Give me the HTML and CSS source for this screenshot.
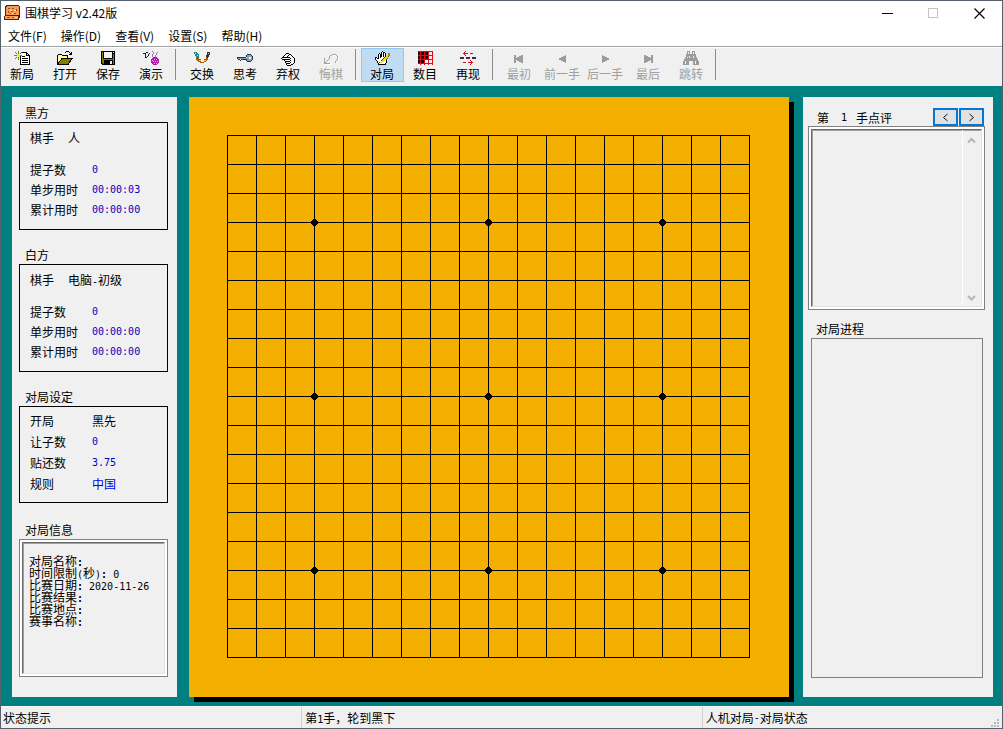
FILE: index.html
```html
<!DOCTYPE html>
<html lang="zh-CN">
<head>
<meta charset="utf-8">
<title>围棋学习 v2.42版</title>
<link rel="stylesheet" href="styles.css">
</head>
<body>
<div class="window">
  <header class="titlebar">
    <svg class="app-icon" viewBox="0 0 16 16"><path d="M2 0h13v1h1v12h-1v2H0v-4h1V1h1z" fill="#4a2410"/><path d="M3 1h12v9H2V2h1z" fill="#f79a52"/><path d="M1 11h13v3H1z" fill="#f9a25c"/><path d="M4 3h2v1H4zM8 3h2v1H8zM12 4h1v2h-1zM4 6h1v2H4zM7 6h2v1H7zM10 8h2v1h-2zM6 8h1v1H6zM3 12h3v1H3zM8 12h2v1H8z" fill="#a04c1c"/><path d="M6 5h2v1H6zM10 5h2v1h-2zM8 8h1v1H8zM11 12h2v1h-2z" fill="#ffe4b8"/></svg>
    <h1 class="title">围棋学习 v2.42版</h1>
    <button class="caption" aria-label="最小化"><svg viewBox="0 0 11 11"><path d="M0 5h11v1H0z"/></svg></button>
    <button class="caption" aria-label="最大化" disabled><svg viewBox="0 0 11 11"><path d="M.5.5h9v9h-9z" fill="none" stroke="#c4c4c4"/></svg></button>
    <button class="caption" aria-label="关闭"><svg class="smooth" viewBox="0 0 11 11"><path d="M.5.5l10 10M10.500.5l-10 10" stroke="#000" stroke-width="1.200"/></svg></button>
  </header>
  <nav class="menubar">
    <button>文件(F)</button><button>操作(D)</button><button>查看(V)</button><button>设置(S)</button><button>帮助(H)</button>
  </nav>
  <div class="toolbar">
    <button><svg viewBox="0 0 16 16"><path d="M6.500 4v9.500h9v-9l-3-3H8M12.500 1.500v3h3" fill="none" stroke="#000"/><path d="M7 4V2h5v3h3v8H7z" fill="#fff"/><path d="M8 5h3v1H8zM8 7h6v1H8zM8 9h6v1H8zM8 11h6v1H8z" fill="#000"/><path d="M4 0h1v3H4zM0 4h3v1H0zM6 4h2v1H6zM4 6h1v3H4zM1 1h1v1H1zM2 2h1v1H2zM7 1h1v1H7zM6 2h1v1H6zM2 6h1v1H2zM1 7h1v1H1z" fill="#808000"/><path d="M3 3h3v3H3z" fill="#e8e84a"/></svg>新局</button>
    <button><svg viewBox="0 0 16 16"><path d="M1 4h4l1 1h5v3H5l-4 5z" fill="#ffff90"/><path d="M5 8h10l-4 5H1z" fill="#808000"/><path d="M.5 13.500V4.500l1-1h3l1 1h5v3M.5 13.500h10.500l4-6H5l-4 5" fill="none" stroke="#000"/><path d="M9 0h3v1H9zM8 1h1v1H8zM12 1h1v1h-1zM13 2h1v1h-1zM14 1h1v3h-3V3h2z" fill="#000"/></svg>打开</button>
    <button><svg viewBox="0 0 16 16"><path d="M1 0h14v14H2l-1-1z" fill="#000"/><path d="M2 1h1v11H2zM13 3h1v10h-1zM3 8h10v1H3zM3 9h1v4H3z" fill="#808000"/><path d="M4 1h8v6H4z" fill="#f0f0f0"/><path d="M10 10h2v3h-2zM13 1h1v1h-1z" fill="#ececec"/></svg>保存</button>
    <button><svg viewBox="0 0 16 16"><path d="M0 2h3v1H0zM3 1h2v1H3zM2 3h1v4H2zM3 6h1v1H3zM4 5h1v1H4zM5 3h1v2H5zM6 2h1v1H6z" fill="#202020"/><path d="M9 0h1v1H9zM10 1h1v2h-1zM9 3h1v3H9zM14 1h1v1h-1zM13 2h1v2h-1zM12 4h1v3h-1z" fill="#b06ab0"/><path d="M10 6h4v1h1v1h1v4h-1v1h-1v1h-4v-1H9v-1H8V8h1V7h1z" fill="#ad19ad"/><path d="M9 9h1v1H9zM11 8h1v1h-1zM13 8h1v1h-1zM10 10h1v1h-1zM12 10h1v1h-1zM14 10h1v1h-1zM11 12h1v1h-1zM13 12h1v1h-1z" fill="#f5b4f5"/></svg>演示</button>
    <span class="sep"></span>
    <button><svg viewBox="0 0 16 16"><path d="M0 1h3v1h1v1h1v3H3v1H2V5H1V3H0z" fill="#148c88"/><path d="M1 2h1v1H1zM3 4h1v1H3z" fill="#a3eee6"/><path d="M13 1h3v3h-1v2h-1v1h-2V4h1z" fill="#3d2925"/><path d="M14 2h1v1h-1z" fill="#e4b5a4"/><path d="M2 7h3v1h2v1h3V8h2V7h2v2h-1v1h-1v1h-2v1H6v-1H4v-1H3V9H2z" fill="#a25b15"/><path d="M5 9h2v1H5zM10 9h2v1h-2z" fill="#ffbd55"/><path d="M7 9h3v2H7z" fill="#fff1d3"/><path d="M3 6h2v1H3zM12 6h1v1h-1z" fill="#278c33"/></svg>交换</button>
    <button><svg viewBox="0 0 16 16"><path d="M0 6h9v1H0zM0 7h1v1H0zM1 8h2v1H1zM3 9h1v1H3zM4 8h5v1H4zM10 3h4v1h-4zM9 4h1v2H9zM14 4h1v1h-1zM15 5h1v4h-1zM14 9h1v1h-1zM10 10h4v1h-4zM9 8h1v2H9z" fill="#263444"/><path d="M1 7h9V4h4v1h1v4h-1v1h-4V8H1z" fill="#8aa1b4"/><path d="M12 6h2v2h-2z" fill="#fff"/></svg>思考</button>
    <button><svg viewBox="0 0 16 16"><path d="M1 7h3V5l4-3h3l4 4v7l-2 1H6l-1-4H2z" fill="#f8f8f8"/><path d="M6 2h3v1H6zM5 3h1v1H5zM4 4h1v1H4zM3 5h1v1H3zM2 6h8v1H2zM9 3h2v1H9zM8 4h1v1H8zM7 5h1v1H7zM11 4h1v1h-1zM12 5h1v1h-1zM13 6h1v1h-1zM14 7h1v5h-1zM13 12h1v1h-1zM11 13h2v1h-2zM1 7h1v1H1zM2 8h8v1H2zM4 9h1v1H4zM5 10h5v1H5zM5 11h1v1H5zM6 12h4v1H6zM6 13h1v1H6zM7 14h4v1H7zM10 7h1v1h-1zM10 9h1v1h-1zM10 11h1v1h-1z" fill="#000"/></svg>弃权</button>
    <button disabled><svg viewBox="0 0 16 16"><path d="M1 7h1v5h5v1H1zM2 11h1v1H2zM3 10h1v1H3zM4 9h1v1H4zM5 8h1v1H5zM6 7h1v1H6zM6 5h1v2H6zM7 4h2v1H7zM9 3h4v1H9zM13 4h1v1h-1zM14 5h1v4h-1zM13 9h1v1h-1zM12 10h1v2h-1z" fill="#a2a2a2"/><path d="M2 13h6v1H2zM9 4h4v1H9zM15 6h1v4h-1zM13 11h1v1h-1z" fill="#fff"/></svg>悔棋</button>
    <span class="sep"></span>
    <button class="active"><svg viewBox="0 0 16 16"><path d="M2 7h3V3h2v3h1V1h3v4h3v5h-2v3H5L2 10z" fill="#fff"/><path d="M1 6h2v1H1zM1 7h1v2H1zM2 9h1v1H2zM3 10h1v2H3zM4 12h1v2H4zM3 7h1v1H3zM4 3h1v5H4zM5 2h1v1H5zM6 3h1v4H6zM7 1h1v5H7zM8 0h1v1H8zM9 1h1v5H9zM10 1h1v1h-1zM11 2h1v4h-1zM12 9h1v3h-1zM11 12h1v2h-1zM5 13h6v1H5z" fill="#000"/><path d="M6 11h2v1H6zM7 10h3v1H7zM8 9h3v1H8zM9 8h3v1H9zM10 7h3v1h-3zM11 6h3v1h-3zM12 5h2v1h-2zM13 4h1v1h-1z" fill="#e8dc28"/><path d="M10 6h1v1h-1zM9 7h1v1H9zM8 8h1v1H8zM7 9h1v1H7zM14 5h1v1h-1zM13 7h1v1h-1zM12 8h1v1h-1zM5 11h1v1H5z" fill="#484800"/><path d="M14 2h2v3h-2z" fill="#d36c29"/></svg>对局</button>
    <button><svg viewBox="0 0 16 16"><path d="M1 0h10v9H1z" fill="#3e0708"/><path d="M1 0h15v1H1zM1 4h15v1H1zM1 8h15v1H1zM1 12h15v1H1zM3 0h1v14H3zM7 0h1v14H7zM11 0h1v14h-1zM15 0h1v14h-1z" fill="#e20c18"/><path d="M1 1h2v2H1zM5 1h2v2H5zM9 1h2v2H9zM5 5h2v2H5zM9 5h2v2H9zM1 9h2v3H1zM4 9h3v3H4z" fill="#200000"/></svg>数目</button>
    <button><svg viewBox="0 0 16 16"><path d="M3 2h5v1H3zM10 2h3v1h-3zM5 0h1v1H5zM4 1h1v1H4zM4 3h1v1H4zM5 4h1v1H5zM3 11h3v1H3zM8 11h5v1H8zM10 9h1v1h-1zM11 10h1v1h-1zM11 12h1v1h-1zM10 13h1v1h-1z" fill="#ce111b"/><path d="M0 6h4v2H0zM6 6h4v2H6zM12 6h4v2h-4z" fill="#542050"/></svg>再现</button>
    <span class="sep"></span>
    <button disabled><svg viewBox="0 0 16 16"><path d="M3 4h2v3h1V6h2V5h2V4h2v8h-2v-1H8v-1H6V9H5v3H3z" fill="#9b9b9b"/></svg>最初</button>
    <button disabled><svg viewBox="0 0 16 16"><path d="M4 8l8-4v8z" fill="#9b9b9b"/></svg>前一手</button>
    <button disabled><svg viewBox="0 0 16 16"><path d="M13 8L5 4v8z" fill="#9b9b9b"/></svg>后一手</button>
    <button disabled><svg viewBox="0 0 16 16"><path d="M13 4h-2v3h-1V6H8V5H6V4H4v8h2v-1h2v-1h2V9h1v3h2z" fill="#9b9b9b"/></svg>最后</button>
    <button disabled><svg viewBox="0 0 16 16"><path d="M4 0h3v3h2V0h3v3h1v3h1v2h1v2h1v4h-6v-4H6v4H0v-4h1V8h1V6h1V3h1z" fill="#9b9b9b"/><path d="M5 1h1v2H5zM10 1h1v2h-1zM4 6h1v1H4zM6 5h1v2H6zM10 5h1v2h-1zM2 10h1v3H2zM12 10h1v3h-1z" fill="#eee"/></svg>跳转</button>
    <span class="sep"></span>
  </div>

  <main class="workspace">
    <aside class="panel players">
      <section>
        <h2>黑方</h2>
        <div class="group">
          <p class="player"><span>棋手</span><span>人</span></p>
          <dl>
            <dt>提子数</dt><dd>0</dd>
            <dt>单步用时</dt><dd>00:00:03</dd>
            <dt>累计用时</dt><dd>00:00:00</dd>
          </dl>
        </div>
      </section>
      <section>
        <h2>白方</h2>
        <div class="group">
          <p class="player"><span>棋手</span><span>电脑<i>-</i>初级</span></p>
          <dl>
            <dt>提子数</dt><dd>0</dd>
            <dt>单步用时</dt><dd>00:00:00</dd>
            <dt>累计用时</dt><dd>00:00:00</dd>
          </dl>
        </div>
      </section>
      <section>
        <h2>对局设定</h2>
        <div class="group rules">
          <dl>
            <dt>开局</dt><dd class="plain">黑先</dd>
            <dt>让子数</dt><dd>0</dd>
            <dt>贴还数</dt><dd>3.75</dd>
            <dt>规则</dt><dd class="han">中国</dd>
          </dl>
        </div>
      </section>
      <section class="info">
        <h2>对局信息</h2>
        <div class="frame">
          <ul class="sunken">
            <li>对局名称<b>:</b></li>
            <li>时间限制<i>(</i>秒<i>)</i><b>: </b><i>0</i></li>
            <li>比赛日期<b>: </b><i>2020-11-26</i></li>
            <li>比赛结果<b>:</b></li>
            <li>比赛地点<b>:</b></li>
            <li>赛事名称<b>:</b></li>
          </ul>
        </div>
      </section>
    </aside>

    <div class="board">
      <svg viewBox="0 0 600 600" role="img" aria-label="棋盘">
        <defs>
          <pattern id="cell" x="38" y="38" width="29" height="29" patternUnits="userSpaceOnUse"><path d="M0 0h29v1H1v28H0z"/></pattern>
          <path id="star" d="M-1-3h3v1h1v1h1v3H3v1H2v1h-3V3h-1V2h-1v-3h1v-1h1z"/>
        </defs>
        <path d="M38 38h523v523H38z" fill="url(#cell)"/>
        <use href="#star" x="125" y="125"/><use href="#star" x="299" y="125"/><use href="#star" x="473" y="125"/>
        <use href="#star" x="125" y="299"/><use href="#star" x="299" y="299"/><use href="#star" x="473" y="299"/>
        <use href="#star" x="125" y="473"/><use href="#star" x="299" y="473"/><use href="#star" x="473" y="473"/>
      </svg>
    </div>

    <aside class="panel review">
      <div class="review-head">
        <label for="comment"><span>第</span><i>1</i><span>手点评</span></label>
        <button aria-label="上一手"><svg class="smooth" viewBox="0 0 9 9"><path d="M6.500 1l-4 3.500 4 3.500" fill="none" stroke="#111"/></svg></button>
        <button aria-label="下一手"><svg class="smooth" viewBox="0 0 9 9"><path d="M2.500 1l4 3.500-4 3.500" fill="none" stroke="#111"/></svg></button>
      </div>
      <div class="frame comment">
        <div class="sunken">
          <textarea id="comment"></textarea>
          <div class="scroll">
            <svg class="smooth" viewBox="0 0 9 9"><path d="M1 6.500L4.500 3 8 6.500" fill="none" stroke="#b5b5b5" stroke-width="2"/></svg>
            <svg class="smooth" viewBox="0 0 9 9"><path d="M1 3l3.500 3.500L8 3" fill="none" stroke="#b5b5b5" stroke-width="2"/></svg>
          </div>
        </div>
      </div>
      <h2>对局进程</h2>
      <div class="history"></div>
    </aside>
  </main>

  <footer class="statusbar">
    <span>状态提示</span>
    <span>第<i>1</i>手，轮到黑下</span>
    <span class="last">人机对局<i>-</i>对局状态<svg viewBox="0 0 9 9"><path d="M6 0h2v2H6zM3 3h2v2H3zM6 3h2v2H6zM0 6h2v2H0zM3 6h2v2H3zM6 6h2v2H6z" fill="#b9b9b9"/></svg></span>
  </footer>
</div>
</body>
</html>
```

FILE: styles.css
```css
* { box-sizing: border-box; }
body, h1, h2, p, dl, dd, ul { margin: 0; padding: 0; }
body, button, textarea {
  font: 12px/20px "Noto Sans CJK SC", sans-serif;
  color: #000;
}
h1, h2 { font-size: 12px; font-weight: 400; }
ul { list-style: none; }
button { padding: 0; border: 0; background: none; }
svg { display: block; flex: none; shape-rendering: crispEdges; }
svg.smooth { shape-rendering: auto; }
i, b, dd {
  font-family: "DejaVu Sans Mono", "Noto Sans CJK SC", monospace;
  font-size: 10px;
  font-style: normal;
}
i, b { line-height: 0; }

.window {
  display: flex;
  flex-direction: column;
  min-height: 100vh;
  border: 1px solid #56616b;
  background: #f0f0f0;
}

.titlebar { display: flex; align-items: center; height: 24px; padding-left: 3px; background: #fff; }
.app-icon { width: 16px; height: 16px; }
.title { flex: 1; padding-left: 5px; }
.caption { display: grid; place-items: center; width: 46px; height: 24px; }
.caption svg { width: 11px; height: 11px; }

.menubar { display: flex; gap: 14px; height: 22px; padding-left: 7px; background: #fff; border-bottom: 1px solid #a0a0a0; }
.menubar button { height: 20px; line-height: 19px; }

.toolbar { display: flex; height: 39px; border-top: 1px solid #fff; }
.toolbar button {
  display: flex;
  flex-direction: column;
  align-items: center;
  width: 43px;
  height: 34px;
  padding: 2px 1px 0 0;
  border: 1px solid transparent;
  line-height: 13px;
  white-space: nowrap;
}
.toolbar button:disabled { color: #a0a0a0; }
.toolbar button.active { background: #c0dcf3; border-color: #90c8f6; }
.toolbar svg { width: 16px; height: 16px; }
.sep { width: 6px; height: 31px; margin: 1px 0 0 2px; border-left: 1px solid #8c8c8c; }

.workspace { display: flex; flex: 1; align-items: flex-start; padding: 11px 9px 9px 11px; background: #008080; }
.panel { display: flex; flex-direction: column; align-self: stretch; flex: none; background: #f0f0f0; }
.panel h2 { line-height: 18px; }

.players { width: 165px; padding: 7px 9px 20px 7px; gap: 16px; }
.players h2 { padding-left: 6px; }
.group { padding: 5px 10px 9px; border: 1px solid #000; }
.player { display: flex; gap: 14px; margin-bottom: 12px; }
.group dl { display: grid; grid-template-columns: 62px 1fr; grid-auto-rows: 20px; }
.group dd { color: #0000c0; }
.group dd.plain, .group dd.han { font-family: "Noto Sans CJK SC", sans-serif; font-size: 12px; }
.group dd.plain { color: #000; }
.group dd.han { color: #0000e0; }
.rules { padding: 4px 10px 7px; }
.rules dl { grid-auto-rows: 21px; }
.info { display: flex; flex-direction: column; flex: 1; padding-top: 2px; }
.info .frame { flex: 1; display: flex; }

.frame { padding: 2px; border: 1px solid #808080; background: #fff; }
.sunken { flex: 1; border: 1px solid; border-color: #696969 #e3e3e3 #e3e3e3 #696969; background: #f0f0f0; box-shadow: inset 1px 1px #a0a0a0; }
.info .sunken { padding: 12px 6px; }
.info li { line-height: 12px; white-space: nowrap; }

.board { flex: 1; margin: 0 14px 0 12px; background: #f4b000; box-shadow: 5px 5px #000; }
.board svg { width: 100%; height: auto; }

.review { width: 190px; padding: 11px 8px 19px 5px; }
.review-head { display: flex; gap: 1px; height: 18px; padding: 0 1px 0 9px; }
.review-head label { display: flex; gap: 12px; flex: 1; }
.review-head i { margin-right: -3px; line-height: 20px; }
.review-head button { display: grid; place-items: center; width: 25px; border: 2px solid #0078d7; background: #e1e1e1; }
.review-head svg { width: 9px; height: 9px; }
.comment { display: flex; height: 184px; }
.comment .sunken { display: flex; }
.comment textarea { flex: 1; min-width: 0; border: 0; padding: 2px; resize: none; background: transparent; overflow: hidden; }
.scroll { display: flex; flex-direction: column; justify-content: space-between; align-items: center; width: 19px; padding: 6px 2px 4px 0; border-left: 1px solid #fff; }
.scroll svg { width: 9px; height: 9px; }
.review h2 { padding: 10px 0 0 8px; }
.history { flex: 1; margin: 0 2px 0 3px; border: 1px solid #808080; }

.statusbar { display: grid; grid-template-columns: 3fr 4fr 3fr; height: 22px; border-top: 1px solid #f8f8f8; }
.statusbar span { padding-left: 3px; border-left: 1px solid #d0d0d0; line-height: 21px; }
.statusbar span:first-child { border-left: 0; padding-left: 2px; }
.statusbar .last { display: flex; padding-right: 2px; }
.statusbar .last i { line-height: 21px; }
.statusbar svg { width: 9px; height: 9px; margin-left: auto; align-self: flex-end; }
```
